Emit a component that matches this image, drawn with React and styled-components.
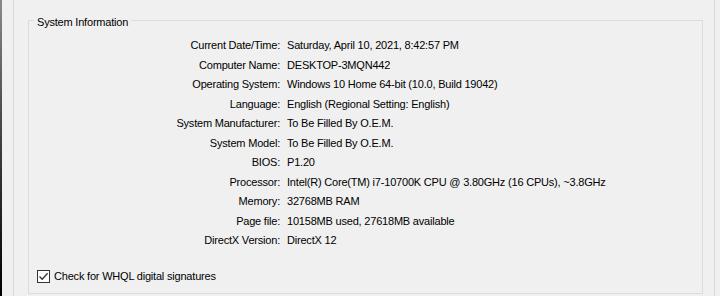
import React from "react";
import styled, { createGlobalStyle } from "styled-components";

const GlobalStyle = createGlobalStyle`
  html, body {
    margin: 0;
    padding: 0;
    background: #f0f0f0;
  }
  body {
    font-family: "Liberation Sans", Arial, sans-serif;
    font-size: 11px;
    letter-spacing: -0.2px;
    color: #000;
  }
`;

const Window = styled.div`
  width: 720px;
  height: 296px;
  display: flex;
  background: #f0f0f0;
  overflow: hidden;
`;

const EdgeStrip = styled.div`
  width: 2px;
  flex: none;
  background: linear-gradient(#8a8a8a, #4a4a4a 40%, #000);
`;

const TabPage = styled.div`
  flex: 1;
  margin-left: 11px;
  margin-right: 5px;
  border-left: 1px solid #d9d9d9;
  border-right: 1px solid #d9d9d9;
  display: flex;
  flex-direction: column;
  padding: 12px 11px 2px 14px;
`;

const GroupBox = styled.fieldset`
  flex: 1;
  margin: 0;
  padding: 0;
  min-width: 0;
  border: 1px solid #dcdcdc;
  display: flex;
  flex-direction: column;
`;

const Legend = styled.legend`
  margin-left: 5px;
  padding: 2px 3px 0;
  line-height: 16px;
  height: 16px;
  box-sizing: border-box;
`;

const InfoGrid = styled.div`
  display: grid;
  grid-template-columns: 251px auto;
  column-gap: 7px;
  margin-top: 8px;
`;

const Label = styled.div`
  text-align: right;
  line-height: 19.5px;
  white-space: nowrap;
`;

const Value = styled.div`
  line-height: 19.5px;
  white-space: nowrap;
`;

const CheckRow = styled.label`
  margin-top: auto;
  margin-bottom: 9px;
  margin-left: 8px;
  display: flex;
  align-items: center;
  gap: 4px;
  line-height: 16px;
`;

const Box = styled.span`
  width: 11px;
  height: 11px;
  border: 1px solid #333;
  background: #fff;
  display: flex;
  align-items: center;
  justify-content: center;
`;

const rows = [
  ["Current Date/Time:", "Saturday, April 10, 2021, 8:42:57 PM"],
  ["Computer Name:", "DESKTOP-3MQN442"],
  ["Operating System:", "Windows 10 Home 64-bit (10.0, Build 19042)"],
  ["Language:", "English (Regional Setting: English)"],
  ["System Manufacturer:", "To Be Filled By O.E.M."],
  ["System Model:", "To Be Filled By O.E.M."],
  ["BIOS:", "P1.20"],
  ["Processor:", "Intel(R) Core(TM) i7-10700K CPU @ 3.80GHz (16 CPUs), ~3.8GHz"],
  ["Memory:", "32768MB RAM"],
  ["Page file:", "10158MB used, 27618MB available"],
  ["DirectX Version:", "DirectX 12"],
];

const App = () => {
  return (
    <Window>
      <GlobalStyle />
      <EdgeStrip />
      <TabPage>
        <GroupBox>
          <Legend>System Information</Legend>
          <InfoGrid>
            {rows.map(([k, v]) => (
              <React.Fragment key={k}>
                <Label>{k}</Label>
                <Value>{v}</Value>
              </React.Fragment>
            ))}
          </InfoGrid>
          <CheckRow>
            <Box>
              <svg width="11" height="11" viewBox="0 0 11 11">
                <path d="M1.5 5.5 L4.2 8.3 L9.6 2.2" fill="none" stroke="#333" strokeWidth="1.3" />
              </svg>
            </Box>
            Check for WHQL digital signatures
          </CheckRow>
        </GroupBox>
      </TabPage>
    </Window>
  );
};

export default App;
